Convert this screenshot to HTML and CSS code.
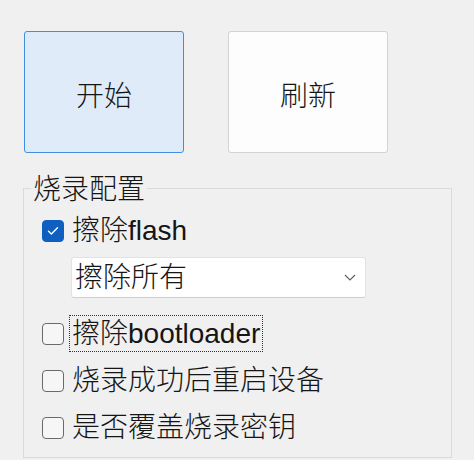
FILE: index.html
```html
<!DOCTYPE html>
<html lang="zh-CN">
<head>
  <meta charset="UTF-8">
  <title>烧录</title>
  <link rel="stylesheet" href="styles.css">
</head>
<body>
<div class="page">
  <div class="actions">
    <button class="btn btn-primary">开始</button>
    <button class="btn">刷新</button>
  </div>
  <div class="group">
    <div class="group-title"><span>烧录配置</span></div>
    <div class="check">
      <span class="box checked"><svg width="12" height="10" viewBox="0 0 12 10"><path d="M1.5 5.2 L4.4 8 L10.5 1.8" fill="none" stroke="#fff" stroke-width="1.4" stroke-linecap="round" stroke-linejoin="round"/></svg></span>
      <span class="text">擦除flash</span>
    </div>
    <div class="combo">
      <span>擦除所有</span>
      <svg width="12" height="7" viewBox="0 0 12 7"><path d="M1 1 L6 6 L11 1" fill="none" stroke="#606060" stroke-width="1.2"/></svg>
    </div>
    <div class="check gap-top">
      <span class="box"></span>
      <span class="text focus">擦除bootloader</span>
    </div>
    <div class="check">
      <span class="box"></span>
      <span class="text">烧录成功后重启设备</span>
    </div>
    <div class="check">
      <span class="box"></span>
      <span class="text">是否覆盖烧录密钥</span>
    </div>
  </div>
</div>
</body>
</html>
```

FILE: styles.css
```css
body{margin:0;background:#f0f0f0;font-family:"Liberation Sans","Noto Sans CJK SC",sans-serif;font-weight:300;color:#151515;}
.page{padding:31px 22px 0 23px;}
.actions{display:flex;gap:44px;padding-left:1px;}
.btn{width:160px;height:122px;box-sizing:border-box;border:1px solid #d3d3d3;border-radius:3px;background:#fdfdfd;font:300 28px/32px "Noto Sans CJK SC",sans-serif;color:#151515;padding:0;padding-top:3px;}
.btn-primary{background:#dfebf9;border-color:#3f8fdf;}
.group{margin-top:35px;width:429px;box-sizing:border-box;border:1px solid #dadada;padding:0 0 11px 0;}
.group-title{margin:-15px 0 0 7px;line-height:32px;font-size:28px;}
.group-title span{background:#f0f0f0;padding:0 2px;}
.check{display:flex;align-items:center;height:37px;padding-left:18px;margin-top:10px;font-size:28px;}
.group-title + .check{margin-top:6px;}
.check.gap-top{margin-top:17px;}
.box{width:22px;height:22px;box-sizing:border-box;border:1.5px solid #6a6a6a;border-radius:4px;background:#f6f6f6;display:flex;align-items:center;justify-content:center;}
.box.checked{background:#0f5fc0;border-color:#0f5fc0;}
.text{margin-left:5px;padding:0 2px;line-height:35px;border:1px dotted transparent;}
.text.focus{border-color:#333;}
.combo{margin:8px 0 0 47px;width:295px;height:41px;box-sizing:border-box;background:#fff;border:1px solid #e2e2e2;border-bottom-color:#cfcfcf;border-radius:3px;display:flex;align-items:center;justify-content:space-between;padding:0 9px 0 3px;font-size:28px;line-height:36px;}
```
